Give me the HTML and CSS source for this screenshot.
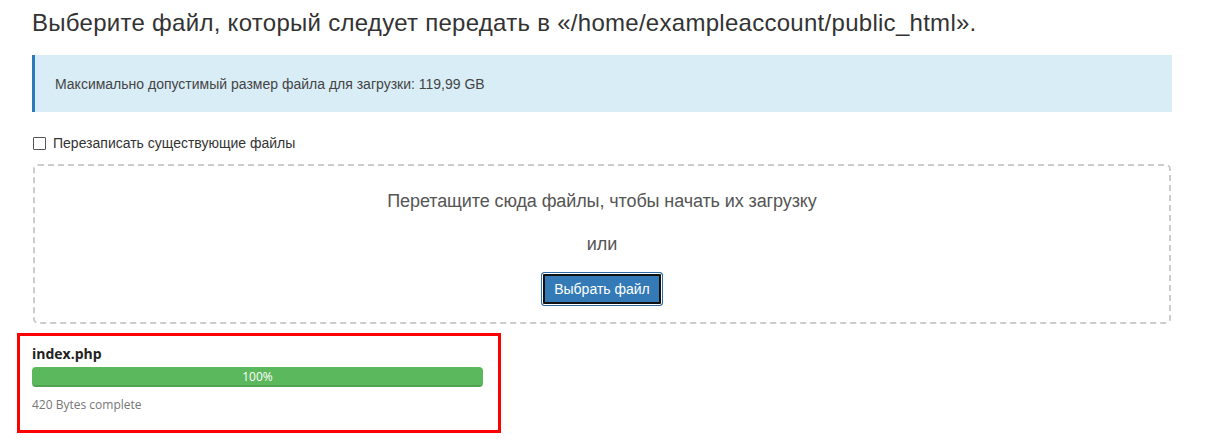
FILE: index.html
```html
<!DOCTYPE html>
<html lang="ru">
<head>
<meta charset="utf-8">
<title>Загрузка файлов</title>
<link rel="stylesheet" href="styles.css">
</head>
<body>
<div class="page">
  <h1 class="title">Выберите файл, который следует передать в «/home/exampleaccount/public_html».</h1>
  <div class="alert">Максимально допустимый размер файла для загрузки: 119,99 GB</div>
  <label class="overwrite"><span class="checkbox"></span>Перезаписать существующие файлы</label>
  <div class="dropzone">
    <p class="drop-text">Перетащите сюда файлы, чтобы начать их загрузку</p>
    <p class="drop-or">или</p>
    <button class="btn-select" type="button">Выбрать файл</button>
  </div>
  <div class="upload-item">
    <div class="file-name">index.php</div>
    <div class="progress"><div class="progress-bar" style="width:100%">100%</div></div>
    <div class="file-status">420 Bytes complete</div>
  </div>
</div>
</body>
</html>
```
FILE: styles.css
```css
html, body {
  margin: 0;
  padding: 0;
  background: #fff;
}
body {
  font-family: "Liberation Sans", Arial, sans-serif;
  color: #333;
}
.page {
  padding: 10px 54px 0 32px;
  width: 1140px;
}
.title {
  margin: 0;
  font-size: 24px;
  font-weight: normal;
  line-height: 26px;
  letter-spacing: 0.28px;
  color: #333;
  white-space: nowrap;
}
.alert {
  margin-top: 19px;
  height: 57px;
  box-sizing: border-box;
  background: #d9edf7;
  border-left: 3px solid #2f7ab8;
  padding-left: 20px;
  display: flex;
  align-items: center;
  font-size: 14px;
  color: #444;
}
.overwrite {
  display: flex;
  align-items: center;
  margin-top: 24px;
  font-size: 14px;
  color: #333;
  height: 14px;
}
.checkbox {
  width: 11px;
  height: 11px;
  border: 1px solid #555;
  border-radius: 1px;
  margin: 0 7px 0 1px;
  background: #fff;
}
.dropzone {
  margin-top: 14px;
  margin-left: 1px;
  width: 1138px;
  height: 160px;
  box-sizing: border-box;
  border: 2px dashed #ccc;
  border-radius: 5px;
  display: flex;
  flex-direction: column;
  align-items: center;
}
.drop-text {
  margin: 25px 0 0;
  font-size: 18px;
  line-height: 20px;
  letter-spacing: -0.1px;
  color: #555;
}
.drop-or {
  margin: 23px 0 0;
  font-size: 18px;
  line-height: 20px;
  color: #555;
}
.btn-select {
  margin-top: 18px;
  width: 122px;
  height: 34px;
  background: #337ab7;
  color: #fff;
  font-family: "Liberation Sans", Arial, sans-serif;
  font-size: 14px;
  border: 1px solid #2e6da4;
  border-radius: 3px;
  box-shadow: inset 0 0 0 1px #fff, inset 0 0 0 3px #111;
  padding: 0;
}
.upload-item {
  margin: 9px 0 0 -15px;
  width: 484px;
  height: 100px;
  box-sizing: border-box;
  border: 3px solid #f00;
  padding: 9px 15px 0 12px;
  font-family: "Open Sans", sans-serif;
}
.file-name {
  font-weight: bold;
  font-size: 14px;
  line-height: 18px;
  color: #222;
}
.progress {
  margin-top: 4px;
  height: 20px;
  border-radius: 4px;
  background: #f5f5f5;
  overflow: hidden;
}
.progress-bar {
  height: 100%;
  background: #5cb85c;
  box-shadow: inset 0 -2px 0 rgba(0,0,0,0.12);
  color: #fff;
  font-size: 12px;
  line-height: 20px;
  text-align: center;
}
.file-status {
  margin-top: 10px;
  font-size: 12px;
  line-height: 16px;
  color: #777;
}
```
